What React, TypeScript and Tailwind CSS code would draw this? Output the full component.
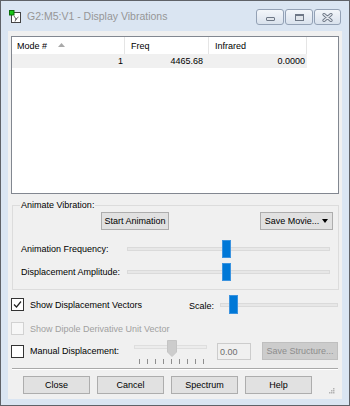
import React from 'react';

const Btn = (props: { w: string; children: React.ReactNode; className?: string }): React.ReactNode => (
  <div
    className={`${props.w} h-[18px] shrink-0 flex items-center justify-center border border-[#adadad] bg-[#e1e1e1] text-black ${props.className ?? ''}`}
  >
    {props.children}
  </div>
);

const CheckBox = (props: { checked?: boolean; disabled?: boolean }): React.ReactNode => (
  <div
    className={`w-[13px] h-[13px] shrink-0 border flex items-center justify-center ${
      props.disabled ? 'border-[#d2d2d2] bg-[#f7f7f7]' : 'border-[#333333] bg-white'
    }`}
  >
    {props.checked && (
      <svg width="9" height="9" viewBox="0 0 9 9">
        <path d="M1 4.5 L3.5 7 L8 1.5" fill="none" stroke="#222" strokeWidth="1.2" />
      </svg>
    )}
  </div>
);

// horizontal trackbar, thumb sits over the track
const Track = (props: { w: string; left: number; h?: string }): React.ReactNode => (
  <div className={`relative ${props.w} ${props.h ?? 'h-[18px]'} shrink-0 flex items-center`}>
    <div className="w-full h-[4px] bg-[#e7e7e7] border border-[#dadada]" />
    <div
      className="absolute top-0 w-[9px] h-full bg-[#0078d7] border border-[#3b93df]"
      style={{ left: props.left }}
    />
  </div>
);

const CaptionButton = (props: { w: string; children: React.ReactNode }): React.ReactNode => (
  <div
    className={`${props.w} h-[16px] rounded-[3px] border border-[#93a1b5] bg-gradient-to-b from-[#f3f6fa] to-[#d9e2ed] flex items-center justify-center`}
  >
    {props.children}
  </div>
);

const TitleBar = (): React.ReactNode => (
  <div className="h-[30px] shrink-0 flex items-start">
    <svg className="ml-[8px] mt-[9px]" width="13" height="14" viewBox="0 0 13 14">
      <rect x="2.5" y="2.5" width="9" height="10" fill="#fff" stroke="#444" />
      <path d="M5 6 L7 9 L9.5 7 M7 9 L6 11.5" fill="none" stroke="#555" strokeWidth="0.9" />
      <circle cx="7" cy="9" r="1" fill="#777" />
      <rect x="0.5" y="0.5" width="4.5" height="4.5" fill="#17c717" stroke="#0a6d0a" />
    </svg>
    <span className="ml-[5px] mt-[9px] text-[10.5px] leading-[13px] text-[#969696]">
      G2:M5:V1 - Display Vibrations
    </span>
    <div className="ml-auto mr-[8px] mt-[8px] flex gap-[1px]">
      <CaptionButton w="w-[28px]">
        <div className="w-[9px] h-[4px] mt-[3px] rounded-[1px] border border-[#6d7786] bg-[#dfe4ea]" />
      </CaptionButton>
      <CaptionButton w="w-[28px]">
        <div className="w-[9px] h-[7px] border border-[#6d7786] border-t-[2px] bg-[#dfe4ea]" />
      </CaptionButton>
      <CaptionButton w="w-[27px]">
        <svg width="11" height="9" viewBox="0 0 11 9">
          <path d="M2 1.5 L9 7.5 M9 1.5 L2 7.5" stroke="#6d7786" strokeWidth="3.2" strokeLinecap="round" />
          <path d="M2 1.5 L9 7.5 M9 1.5 L2 7.5" stroke="#e4e8ee" strokeWidth="1.4" strokeLinecap="round" />
        </svg>
      </CaptionButton>
    </div>
  </div>
);

const ModeList = (): React.ReactNode => (
  <div className="ml-[3px] mt-[5px] w-[328px] h-[158px] border border-[#828790] bg-white">
    <div className="flex h-[17px] items-center">
      <div className="w-[113px] h-full border-r border-[#e5e5e5] pl-[5px] flex items-center">
        Mode #
        <svg className="ml-[11px] mb-[2px]" width="7" height="4" viewBox="0 0 7 4">
          <path d="M0 4 L3.5 0 L7 4 Z" fill="#a9a9a9" />
        </svg>
      </div>
      <div className="w-[84px] h-full border-r border-[#e5e5e5] pl-[6px] flex items-center">Freq</div>
      <div className="w-[98px] h-full border-r border-[#e5e5e5] pl-[6px] flex items-center">Infrared</div>
    </div>
    <div className="flex h-[14px] w-[295px] items-center bg-[#f0f0f0]">
      <div className="w-[113px] text-right pr-[2px]">1</div>
      <div className="w-[84px] text-right pr-[6px]">4465.68</div>
      <div className="w-[98px] text-right pr-[2px]">0.0000</div>
    </div>
  </div>
);

const AnimateGroup = (): React.ReactNode => (
  <div className="relative ml-[4px] mt-[11px] w-[327px] h-[85px] border border-[#dcdcdc]">
    <span className="absolute left-[7px] top-[-7px] px-[1px] bg-[#f0f0f0] leading-[12px]">Animate Vibration:</span>
    <div className="flex mt-[6px]">
      <Btn w="w-[68px]" className="ml-[88px]">Start Animation</Btn>
      <Btn w="w-[73px]" className="ml-[91px] gap-[3px]">
        Save Movie...
        <svg width="6" height="4" viewBox="0 0 6 4">
          <path d="M0 0 L6 0 L3 4 Z" fill="#000" />
        </svg>
      </Btn>
    </div>
    <div className="flex items-center mt-[10px]">
      <span className="w-[106px] ml-[8px] shrink-0">Animation Frequency:</span>
      <Track w="w-[203px]" left={95} />
    </div>
    <div className="flex items-center mt-[5px]">
      <span className="w-[106px] ml-[8px] shrink-0">Displacement Amplitude:</span>
      <Track w="w-[203px]" left={95} />
    </div>
  </div>
);

const ManualRow = (): React.ReactNode => (
  <div className="flex items-start mt-[5px] h-[25px] pl-[3px]">
    <div className="mt-[5px]">
      <CheckBox />
    </div>
    <span className="ml-[6px] mt-[5px] w-[104px] shrink-0 leading-[12px]">Manual Displacement:</span>
    <div className="w-[73px] shrink-0 flex flex-col">
      <div className="relative h-[17px] flex items-start">
        <div className="mt-[5px] w-full h-[4px] bg-[#ececec] border border-[#dedede]" />
        <svg className="absolute top-0 left-[33px]" width="10" height="17" viewBox="0 0 10 17">
          <path d="M0.5 0.5 H9.5 V12 L5 16.5 L0.5 12 Z" fill="#cccccc" stroke="#c4c4c4" />
        </svg>
      </div>
      <div className="flex gap-[7px] ml-[5px] mt-[2px]">
        {[0, 1, 2, 3, 4, 5, 6, 7, 8].map(i => (
          <div key={i} className="w-[1px] h-[5px] bg-[#8e8e8e]" />
        ))}
      </div>
    </div>
    <div className="ml-[10px] mt-[3px] w-[34px] h-[17px] shrink-0 border border-[#cccccc] bg-[#f0f0f0] text-[#6d6d6d] pl-[2px] flex items-center">
      0.00
    </div>
    <div className="ml-[11px] mt-[2px] w-[76px] h-[18px] shrink-0 border border-[#bfbfbf] bg-[#cccccc] text-[#8d8d8d] flex items-center justify-center">
      Save Structure...
    </div>
  </div>
);

export default function App() {
  return (
    <div className="w-[350px] h-[406px] border border-[#5f6268] bg-[#dae5f2] flex flex-col font-['Liberation_Sans',Arial,sans-serif] text-[9px] leading-[12px] text-black">
      <TitleBar />
      <div className="mx-[7px] h-[368px] shrink-0 bg-[#f0f0f0] flex flex-col">
        <ModeList />
        <AnimateGroup />

        <div className="flex items-center mt-[5px] h-[19px] pl-[3px]">
          <CheckBox checked />
          <span className="ml-[6px] w-[159px] shrink-0">Show Displacement Vectors</span>
          <span className="w-[31px] shrink-0 mt-[3px]">Scale:</span>
          <Track w="w-[118px]" left={9} h="h-[19px]" />
        </div>

        <div className="flex items-center mt-[8px] h-[13px] pl-[3px]">
          <CheckBox disabled />
          <span className="ml-[6px] text-[#a0a0a0]">Show Dipole Derivative Unit Vector</span>
        </div>

        <ManualRow />

        <div className="ml-[4px] mt-[3px] w-[326px] h-[2px] border-t border-[#a9a9a9] border-b border-b-white" />

        <div className="flex items-start mt-[6px] h-[18px]">
          <Btn w="w-[67px]" className="ml-[15px]">Close</Btn>
          <Btn w="w-[67px]" className="ml-[7px]">Cancel</Btn>
          <Btn w="w-[67px]" className="ml-[7px]">Spectrum</Btn>
          <Btn w="w-[67px]" className="ml-[7px]">Help</Btn>
          <svg className="ml-auto mr-[7px] mt-[11px]" width="7" height="7" viewBox="0 0 7 7">
            <rect x="5" y="1" width="1.5" height="1.5" fill="#b3b3b3" />
            <rect x="3" y="3" width="1.5" height="1.5" fill="#b3b3b3" />
            <rect x="5" y="3" width="1.5" height="1.5" fill="#b3b3b3" />
            <rect x="1" y="5" width="1.5" height="1.5" fill="#b3b3b3" />
            <rect x="3" y="5" width="1.5" height="1.5" fill="#b3b3b3" />
            <rect x="5" y="5" width="1.5" height="1.5" fill="#b3b3b3" />
          </svg>
        </div>
      </div>
    </div>
  );
}
